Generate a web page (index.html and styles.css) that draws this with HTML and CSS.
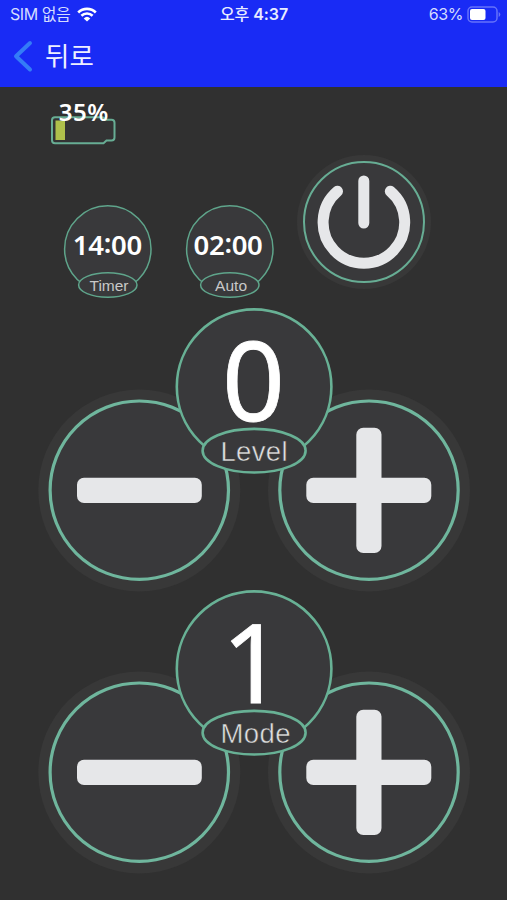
FILE: index.html
```html
<!DOCTYPE html>
<html lang="ko">
<head>
<meta charset="utf-8">
<meta name="viewport" content="width=device-width, initial-scale=1">
<title>뒤로</title>
<link rel="stylesheet" href="styles.css">
</head>
<body>
<header class="header">
  <div class="status">
    <div class="carrier">
      <span>SIM 없음</span>
      <svg class="wifi" viewBox="0 0 20 15">
        <path class="wifi-arc" d="M1.2 5.500a12.500 12.500 0 0 1 17.600 0M4.400 8.800a8 8 0 0 1 11.200 0"/>
        <path class="wifi-dot" d="M10 14.600 6.700 11.400a4.800 4.800 0 0 1 6.600 0z"/>
      </svg>
    </div>
    <div class="clock">오후 <b>4:37</b></div>
    <div class="charge">
      <span>63%</span>
      <svg class="charge-icon" viewBox="0 0 34 17">
        <rect class="charge-case" x="1" y="1" width="29" height="15" rx="4"/>
        <rect class="charge-fill" x="3" y="3" width="15.500" height="11" rx="2"/>
        <path class="charge-tip" d="M31.700 6v5q1.600-.8 1.600-2.500T31.700 6z"/>
      </svg>
    </div>
  </div>
  <nav class="nav">
    <svg class="chevron" viewBox="0 0 22 32"><path d="M18 3 4 16.200 18 29.500"/></svg>
    <span class="nav-title">뒤로</span>
  </nav>
</header>
<main class="remote">
  <section class="info">
    <div class="readouts">
      <svg class="battery" viewBox="48 98 72 50">
        <path class="line battery-case" d="M55 117.200H102Q104.500 117.200 104.500 119.700H111.500Q114.500 119.700 114.500 122.700V137.500Q114.500 140.500 111.500 140.500H106.500L103.500 143.300H55Q52 143.300 52 140.300V120.200Q52 117.200 55 117.200z"/>
        <rect class="battery-level" x="55.500" y="120.500" width="9.500" height="19.500"/>
        <text class="battery-text" x="58.800" y="120.900" textLength="49.500">35%</text>
      </svg>
      <div class="times">
        <svg class="time" viewBox="64 204 88 95">
          <circle class="face line-thin" cx="107.800" cy="249" r="43.200"/>
          <ellipse class="face line-thin" cx="107.800" cy="285" rx="29.200" ry="12.200"/>
          <text class="time-value" x="72.800" y="255.300">14<tspan dy="-2">:</tspan><tspan dy="2">00</tspan></text>
          <text class="time-label" x="109" y="290.500" text-anchor="middle" textLength="39">Timer</text>
        </svg>
        <svg class="time" viewBox="64 204 88 95">
          <circle class="face line-thin" cx="107.800" cy="249" r="43.200"/>
          <ellipse class="face line-thin" cx="107.800" cy="285" rx="29.200" ry="12.200"/>
          <text class="time-value" x="71.500" y="255.300">02<tspan dy="-2">:</tspan><tspan dy="2">00</tspan></text>
          <text class="time-label" x="109" y="290.500" text-anchor="middle" textLength="32">Auto</text>
        </svg>
      </div>
    </div>
    <svg class="power" viewBox="296 154 136 136">
      <circle class="halo" cx="364" cy="222" r="67"/>
      <circle class="face line" cx="364" cy="222" r="60"/>
      <path class="power-mark" d="M337.500 191.300A40.800 40.800 0 1 0 390.300 191.300M363.800 181V223"/>
    </svg>
  </section>
  <svg class="control" viewBox="38 307.500 432 282.500">
    <circle class="halo" cx="139.300" cy="490" r="101"/>
    <circle class="halo" cx="369" cy="490" r="101"/>
    <circle class="face ring" cx="139.300" cy="489.700" r="89.200"/>
    <circle class="face ring" cx="369" cy="489.700" r="89.200"/>
    <rect class="mark" x="77" y="477.200" width="124.800" height="25.300" rx="7"/>
    <rect class="mark" x="306.300" y="477.200" width="125" height="25.300" rx="7"/>
    <rect class="mark" x="356.300" y="427.300" width="25.200" height="125.300" rx="7"/>
    <circle class="face dial" cx="254.100" cy="386.200" r="77.300"/>
    <ellipse class="face dial" cx="254.100" cy="450.200" rx="51.500" ry="21.800"/>
    <text class="value" x="253.500" y="420.700" text-anchor="middle">0</text>
    <text class="label" x="220.500" y="460" textLength="67">Level</text>
  </svg>
  <svg class="control" viewBox="38 307.500 432 282.500">
    <circle class="halo" cx="139.300" cy="490" r="101"/>
    <circle class="halo" cx="369" cy="490" r="101"/>
    <circle class="face ring" cx="139.300" cy="489.700" r="89.200"/>
    <circle class="face ring" cx="369" cy="489.700" r="89.200"/>
    <rect class="mark" x="77" y="477.200" width="124.800" height="25.300" rx="7"/>
    <rect class="mark" x="306.300" y="477.200" width="125" height="25.300" rx="7"/>
    <rect class="mark" x="356.300" y="427.300" width="25.200" height="125.300" rx="7"/>
    <circle class="face dial" cx="254.100" cy="386.200" r="77.300"/>
    <ellipse class="face dial" cx="254.100" cy="450.200" rx="51.500" ry="21.800"/>
    <text class="value" x="253" y="420.700" text-anchor="middle">1</text>
    <text class="label" x="220.500" y="460" textLength="70">Mode</text>
  </svg>
</main>
</body>
</html>
```
FILE: styles.css
```css
* { box-sizing: border-box; }

body {
  margin: 0;
  height: 900px;
  overflow: hidden;
  background: #303030;
  color: #fff;
  font-family: "Liberation Sans", "Noto Sans CJK KR", sans-serif;
}

svg {
  display: block;
  flex: none;
  fill: none;
  overflow: visible;
}

.header {
  height: 87px;
  background: #192bf5;
}

.status {
  display: grid;
  grid-template-columns: 1fr auto 1fr;
  align-items: center;
  height: 29px;
  padding: 0 6px 0 10px;
  font: 16px/29px Inter, "Noto Sans CJK KR", sans-serif;
  color: #d4dcff;
  white-space: nowrap;
}

.carrier, .charge {
  display: flex;
  align-items: center;
}

.carrier { gap: 7px; letter-spacing: -0.45px; }
.wifi { width: 20px; height: 15px; }
.wifi-arc { stroke: #fff; stroke-width: 2.600; }
.wifi-dot { fill: #fff; }
.clock { font-weight: 500; color: #e8ecff; letter-spacing: -0.1px; padding-right: 3px; }
.clock b { font-weight: 600; }
.charge { justify-content: flex-end; gap: 4px; letter-spacing: -0.4px; }
.charge-icon { width: 34px; height: 17px; }
.charge-case { stroke: #6673fa; stroke-width: 1.500; }
.charge-fill { fill: #fff; }
.charge-tip { fill: #6673fa; }

.nav {
  display: flex;
  align-items: center;
  gap: 11px;
  height: 54px;
  padding-left: 12px;
}

.chevron { width: 22px; height: 32px; }
.chevron path {
  stroke: #347cf7;
  stroke-width: 4;
  stroke-linecap: round;
  stroke-linejoin: round;
}

.nav-title {
  padding-bottom: 3px;
  font: 26.500px/40px "Noto Sans CJK KR", sans-serif;
  color: #eef0ff;
}

.remote { height: 813px; }

.info {
  display: flex;
  height: 220.500px;
  padding: 11px 75px 0 48px;
  justify-content: space-between;
}

.readouts { display: flex; flex-direction: column; }
.battery { width: 72px; height: 50px; }
.times {
  display: flex;
  gap: 33.500px;
  padding: 56px 0 0 16px;
}
.time { width: 88px; height: 95px; }
.power { width: 136px; height: 136px; margin-top: 56px; }
.control { width: 432px; height: 282.500px; margin-left: 38px; }

.halo { fill: #383838; }
.face { fill: #39393b; }
.line { stroke: #67ad94; stroke-width: 2; }
.line-thin { stroke: #5fa58b; stroke-width: 1.500; }
.ring { stroke: #6fb69d; stroke-width: 3.200; }
.dial { stroke: #68b195; stroke-width: 2.600; }
.mark { fill: #e6e7e9; }
.power-mark {
  stroke: #e6e7e9;
  stroke-width: 11;
  stroke-linecap: round;
}

.battery-case { fill: #333334; }
.battery-level { fill: #afc04b; }
.battery-text { font: 600 24px "Noto Sans", sans-serif; fill: #fff; }
.time-value {
  font: 600 27.500px "Noto Sans", sans-serif;
  letter-spacing: -0.3px;
  fill: #fff;
}
.time-label {
  font: 15.500px "Liberation Sans", sans-serif;
  fill: #c8c8c8;
}
.value {
  font: 110px "Noto Sans", sans-serif;
  fill: #fff;
  stroke: #fff;
  stroke-width: 0.800;
}
.label {
  font: 27.500px "Liberation Sans", sans-serif;
  fill: #e0e0e0;
  stroke: #39393b;
  stroke-width: 0.500;
}
```
